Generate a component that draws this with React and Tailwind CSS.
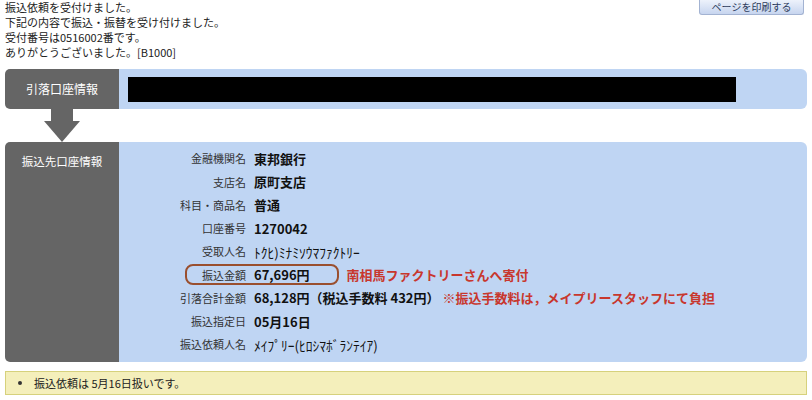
const rows = [
  { label: '金融機関名', value: '東邦銀行' },
  { label: '支店名', value: '原町支店' },
  { label: '科目・商品名', value: '普通' },
  { label: '口座番号', value: '1270042' },
  { label: '受取人名', value: 'ﾄｸﾋ)ﾐﾅﾐｿｳﾏﾌｧｸﾄﾘｰ', kana: true },
  { label: '振込金額', value: '67,696円', circled: true, note: '南相馬ファクトリーさんへ寄付' },
  { label: '引落合計金額', value: '68,128円（税込手数料 432円）', note: '※振込手数料は，メイプリースタッフにて負担' },
  { label: '振込指定日', value: '05月16日' },
  { label: '振込依頼人名', value: 'ﾒｲﾌﾟﾘｰ(ﾋﾛｼﾏﾎﾞﾗﾝﾃｲｱ)', kana: true },
]

function Row({ row }) {
  return (
    <div className="relative flex items-center h-[23.25px]">
      {row.circled && (
        <div className="absolute left-[66px] top-[1px] w-[154px] h-[21px] border-[2.5px] border-[#9a4f2e] rounded-[8px]" />
      )}
      <span className="w-[127px] text-right text-[11px] text-[#333] shrink-0">{row.label}</span>
      <span className={row.kana ? 'ml-[8px] text-[13.5px] text-[#111]' : 'ml-[8px] text-[13px] font-bold text-[#111]'}>
        {row.value}
      </span>
      {row.note && (
        <span className={`${row.circled ? 'ml-[37px]' : 'ml-[3px]'} text-[13px] font-bold text-[#c8372d]`}>{row.note}</span>
      )}
    </div>
  )
}

export default function App() {
  return (
    <div className="w-[812px] h-[400px] bg-white px-[5px] font-['Noto_Sans_CJK_JP',sans-serif] overflow-hidden">
      <div className="flex justify-between items-start">
        <div className="text-[11px] leading-[15px] text-[#222]">
          <p>振込依頼を受付けました。</p>
          <p>下記の内容で振込・振替を受け付けました。</p>
          <p>受付番号は0516002番です。</p>
          <p>ありがとうございました。[B1000]</p>
        </div>
        <button className="mr-[3px] h-[15px] w-[105px] flex items-center justify-center rounded-b-[3px] border border-t-0 border-[#a3b3d2] bg-gradient-to-b from-[#edf2fb] to-[#c7d5ef] text-[10px] leading-none text-[#2c3b5c]">
          ページを印刷する
        </button>
      </div>

      <div className="mt-[9px] flex h-[40px]">
        <div className="w-[114px] shrink-0 bg-[#656565] rounded-l-[5px] flex items-center justify-center text-[12px] text-white">
          引落口座情報
        </div>
        <div className="flex-1 bg-[#bfd5f3] rounded-r-[6px] flex items-center pl-[9px]">
          <div className="w-[608px] h-[25px] bg-black" />
        </div>
      </div>

      <div className="w-[114px] h-[33px]">
        <svg width="114" height="33" viewBox="0 0 114 33">
          <rect x="46" y="0" width="22" height="13" fill="#656565" />
          <polygon points="39,12 75,12 57,33" fill="#656565" />
        </svg>
      </div>

      <div className="flex h-[220px]">
        <div className="w-[114px] shrink-0 bg-[#656565] rounded-l-[5px] flex justify-center pt-[11px] text-[11.5px] leading-[16px] text-white">
          振込先口座情報
        </div>
        <div className="flex-1 bg-[#bfd5f3] rounded-r-[6px] pt-[5px]">
          {rows.map(r => <Row key={r.label} row={r} />)}
        </div>
      </div>

      <div className="mt-[9px] h-[24px] border border-[#d6d17c] bg-[#f4efbb] flex items-center pl-[12px] text-[11px] text-[#222]">
        <span className="w-[4px] h-[4px] rounded-full bg-[#333] mr-[12px]" />
        <span>振込依頼は 5月16日扱いです。</span>
      </div>
    </div>
  )
}
